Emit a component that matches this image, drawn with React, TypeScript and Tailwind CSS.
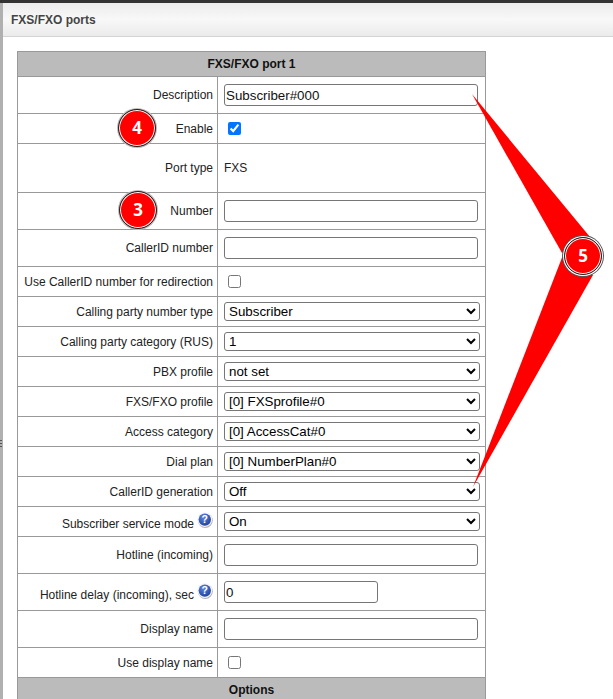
import React from 'react';

const selectOptions: Record<string, string> = {
  'Calling party number type': 'Subscriber',
  'Calling party category (RUS)': '1',
  'PBX profile': 'not set',
  'FXS/FXO profile': '[0] FXSprofile#0',
  'Access category': '[0] AccessCat#0',
  'Dial plan': '[0] NumberPlan#0',
  'CallerID generation': 'Off',
  'Subscriber service mode': 'On',
};

const Help = () => (
  <svg width="16" height="16" viewBox="0 0 16 16" className="ml-[3px] mb-[3px] shrink-0">
    <defs>
      <radialGradient id="helpBlue" cx="40%" cy="30%" r="75%">
        <stop offset="0" stopColor="#5f86dc" />
        <stop offset="1" stopColor="#1c3f9e" />
      </radialGradient>
    </defs>
    <circle cx="8.3" cy="8.5" r="7.5" fill="#b4b4b4" />
    <circle cx="7.8" cy="7.6" r="7.4" fill="#f4f4f4" />
    <circle cx="7.8" cy="7.6" r="6.2" fill="url(#helpBlue)" />
    <text x="7.8" y="11.4" textAnchor="middle" fontSize="10.5" fontWeight="700" fill="#fff" fontFamily="Liberation Sans, sans-serif">?</text>
  </svg>
);

const Row = ({ label, h, help, children }: { label: string; h: string; help?: boolean; children: React.ReactNode }) => (
  <div className={`flex border-b border-[#999] ${h}`}>
    <div className="w-[200px] shrink-0 flex items-center justify-end pr-[4px] border-r border-[#999] text-right">
      <span className={help ? 'pt-[5px]' : ''}>{label}</span>
      {help && <Help />}
    </div>
    <div className="flex-1 flex items-center pl-[6px]">{children}</div>
  </div>
);

const TextInput = ({ value, width = 'w-[254px]' }: { value?: string; width?: string }) => (
  <input
    readOnly
    value={value ?? ''}
    className={`${width} h-[22px] px-[1px] border border-[#767676] rounded-[3px] bg-white text-[13.33px] text-[#111]`}
  />
);

const Select = ({ label }: { label: string }) => (
  <select className="w-[256px] h-[19px] border border-[#767676] rounded-[3px] bg-white text-[13.33px] text-black" defaultValue={selectOptions[label]}>
    <option>{selectOptions[label]}</option>
  </select>
);

const Check = ({ on }: { on?: boolean }) => (
  <input type="checkbox" readOnly checked={!!on} className="w-[13px] h-[13px] ml-[4px]" />
);

const Badge = ({ n, className }: { n: string; className: string }) => (
  <div className={`absolute w-[38px] h-[38px] rounded-full bg-[#f00] border border-[#222] flex items-center justify-center text-white font-bold text-[17px] ${className}`} style={{ fontFamily: '"Open Sans", sans-serif' }}>
    {n}
  </div>
);

export default function App() {
  return (
    <div className="relative w-[613px] h-[699px] overflow-hidden bg-white text-[12px] text-[#222]" style={{ fontFamily: '"Liberation Sans", Arial, sans-serif' }}>
      <div className="h-[3px] bg-[#333]" />
      <div className="flex h-[696px]">
        <div className="w-[3px] bg-[#b0b0b0] shrink-0" />
        <div className="flex-1 min-w-0">
          <div className="h-[34px] flex items-center pl-[8px] bg-gradient-to-b from-[#ececec] via-[#f8f8f8] to-[#ebebeb] border-b border-[#d4d4d4] font-bold text-[#444]">
            FXS/FXO ports
          </div>
          <div className="ml-[14px] mt-[14px] w-[469px] border-x border-t border-[#999]">
            <div className="h-[25px] flex items-center justify-center bg-[#bbb] border-b border-[#999] font-bold text-[#111]">FXS/FXO port 1</div>
            <Row label="Description" h="h-[37px]"><TextInput value="Subscriber#000" /></Row>
            <Row label="Enable" h="h-[30px]"><Check on /></Row>
            <Row label="Port type" h="h-[49px]">FXS</Row>
            <Row label="Number" h="h-[37px]"><TextInput /></Row>
            <Row label="CallerID number" h="h-[37px]"><TextInput /></Row>
            <Row label="Use CallerID number for redirection" h="h-[30px]"><Check /></Row>
            <Row label="Calling party number type" h="h-[30px]"><Select label="Calling party number type" /></Row>
            <Row label="Calling party category (RUS)" h="h-[30px]"><Select label="Calling party category (RUS)" /></Row>
            <Row label="PBX profile" h="h-[30px]"><Select label="PBX profile" /></Row>
            <Row label="FXS/FXO profile" h="h-[30px]"><Select label="FXS/FXO profile" /></Row>
            <Row label="Access category" h="h-[30px]"><Select label="Access category" /></Row>
            <Row label="Dial plan" h="h-[30px]"><Select label="Dial plan" /></Row>
            <Row label="CallerID generation" h="h-[30px]"><Select label="CallerID generation" /></Row>
            <Row label="Subscriber service mode" h="h-[30px]" help><Select label="Subscriber service mode" /></Row>
            <Row label="Hotline (incoming)" h="h-[37px]"><TextInput /></Row>
            <Row label="Hotline delay (incoming), sec" h="h-[37px]" help><TextInput value="0" width="w-[154px]" /></Row>
            <Row label="Display name" h="h-[37px]"><TextInput /></Row>
            <Row label="Use display name" h="h-[30px]"><Check /></Row>
            <div className="h-[24px] flex items-center justify-center bg-[#bbb] font-bold text-[#111]">Options</div>
          </div>
        </div>
      </div>

      {/* resize grip on the left strip */}
      <div className="absolute left-0 top-[440px] w-[2px] h-[7px] flex flex-col justify-between">
        <div className="h-px bg-[#555]" />
        <div className="h-px bg-[#555]" />
        <div className="h-px bg-[#555]" />
      </div>

      <svg className="absolute left-0 top-0 pointer-events-none" width="613" height="699">
        <polygon points="472,94 590,237 562,253" fill="#f00" />
        <polygon points="473,487 563,255 593,275" fill="#f00" />
      </svg>
      <Badge n="4" className="left-[118px] top-[109px] shadow-[inset_0_0_0_1px_#fff,0_0_0_1px_#bbb]" />
      <Badge n="3" className="left-[119px] top-[191px] shadow-[inset_0_0_0_1px_#fff,0_0_0_1px_#bbb]" />
      <Badge n="5" className="left-[564px] top-[237px] shadow-[inset_0_0_0_1px_#fff,0_0_0_1px_#fff,0_0_0_2px_#555]" />
    </div>
  );
}
